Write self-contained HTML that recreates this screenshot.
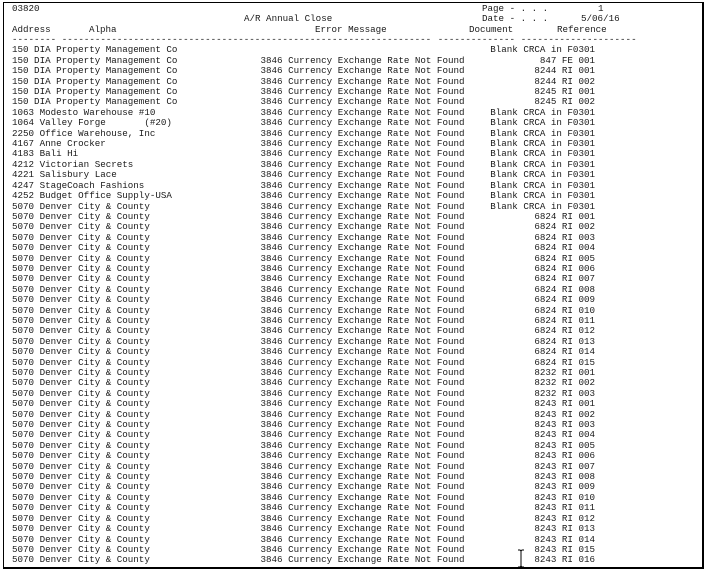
<!DOCTYPE html>
<html><head><meta charset="utf-8"><style>
html,body{margin:0;padding:0;background:#fff;width:705px;height:569px;overflow:hidden}
.box{position:absolute;left:3px;top:2px;width:698px;height:564px;border:1px solid #000;border-right-width:2px;border-bottom-width:2px}
.wrap{position:absolute;left:0;top:3.8px;width:705px;font-family:"Liberation Mono",monospace;font-size:9.2px;color:#1a1a1a}
.r{position:relative;height:10.41px;line-height:10.41px;white-space:pre}
.r span{position:absolute;top:0}
.a{left:12px}.e{left:260.5px}.d{right:110px}
</style></head><body>
<div class="box"></div>
<div class="wrap">
<div class="r"><span class="a">03820</span><span style="left:482px">Page - . . .</span><span style="left:598px">1</span></div>
<div class="r"><span style="left:244px">A/R Annual Close</span><span style="left:482px">Date - . . .</span><span style="left:581px">5/06/16</span></div>
<div class="r"><span class="a">Address</span><span style="left:89px">Alpha</span><span style="left:315px">Error Message</span><span style="left:469px">Document</span><span style="left:557px">Reference</span></div>
<div class="r"><span class="a">--------</span><span style="left:61.8px">-------------------------------------------------------------------</span><span style="left:437.8px">--------------</span><span style="left:520.8px">---------------------</span></div>
<div class="r"><span class="a">150 DIA Property Management Co</span><span class="d">Blank CRCA in F0301</span></div>
<div class="r"><span class="a">150 DIA Property Management Co</span><span class="e">3846 Currency Exchange Rate Not Found</span><span class="d">847 FE 001</span></div>
<div class="r"><span class="a">150 DIA Property Management Co</span><span class="e">3846 Currency Exchange Rate Not Found</span><span class="d">8244 RI 001</span></div>
<div class="r"><span class="a">150 DIA Property Management Co</span><span class="e">3846 Currency Exchange Rate Not Found</span><span class="d">8244 RI 002</span></div>
<div class="r"><span class="a">150 DIA Property Management Co</span><span class="e">3846 Currency Exchange Rate Not Found</span><span class="d">8245 RI 001</span></div>
<div class="r"><span class="a">150 DIA Property Management Co</span><span class="e">3846 Currency Exchange Rate Not Found</span><span class="d">8245 RI 002</span></div>
<div class="r"><span class="a">1063 Modesto Warehouse #10</span><span class="e">3846 Currency Exchange Rate Not Found</span><span class="d">Blank CRCA in F0301</span></div>
<div class="r"><span class="a">1064 Valley Forge       (#20)</span><span class="e">3846 Currency Exchange Rate Not Found</span><span class="d">Blank CRCA in F0301</span></div>
<div class="r"><span class="a">2250 Office Warehouse, Inc</span><span class="e">3846 Currency Exchange Rate Not Found</span><span class="d">Blank CRCA in F0301</span></div>
<div class="r"><span class="a">4167 Anne Crocker</span><span class="e">3846 Currency Exchange Rate Not Found</span><span class="d">Blank CRCA in F0301</span></div>
<div class="r"><span class="a">4183 Bali Hi</span><span class="e">3846 Currency Exchange Rate Not Found</span><span class="d">Blank CRCA in F0301</span></div>
<div class="r"><span class="a">4212 Victorian Secrets</span><span class="e">3846 Currency Exchange Rate Not Found</span><span class="d">Blank CRCA in F0301</span></div>
<div class="r"><span class="a">4221 Salisbury Lace</span><span class="e">3846 Currency Exchange Rate Not Found</span><span class="d">Blank CRCA in F0301</span></div>
<div class="r"><span class="a">4247 StageCoach Fashions</span><span class="e">3846 Currency Exchange Rate Not Found</span><span class="d">Blank CRCA in F0301</span></div>
<div class="r"><span class="a">4252 Budget Office Supply-USA</span><span class="e">3846 Currency Exchange Rate Not Found</span><span class="d">Blank CRCA in F0301</span></div>
<div class="r"><span class="a">5070 Denver City &amp; County</span><span class="e">3846 Currency Exchange Rate Not Found</span><span class="d">Blank CRCA in F0301</span></div>
<div class="r"><span class="a">5070 Denver City &amp; County</span><span class="e">3846 Currency Exchange Rate Not Found</span><span class="d">6824 RI 001</span></div>
<div class="r"><span class="a">5070 Denver City &amp; County</span><span class="e">3846 Currency Exchange Rate Not Found</span><span class="d">6824 RI 002</span></div>
<div class="r"><span class="a">5070 Denver City &amp; County</span><span class="e">3846 Currency Exchange Rate Not Found</span><span class="d">6824 RI 003</span></div>
<div class="r"><span class="a">5070 Denver City &amp; County</span><span class="e">3846 Currency Exchange Rate Not Found</span><span class="d">6824 RI 004</span></div>
<div class="r"><span class="a">5070 Denver City &amp; County</span><span class="e">3846 Currency Exchange Rate Not Found</span><span class="d">6824 RI 005</span></div>
<div class="r"><span class="a">5070 Denver City &amp; County</span><span class="e">3846 Currency Exchange Rate Not Found</span><span class="d">6824 RI 006</span></div>
<div class="r"><span class="a">5070 Denver City &amp; County</span><span class="e">3846 Currency Exchange Rate Not Found</span><span class="d">6824 RI 007</span></div>
<div class="r"><span class="a">5070 Denver City &amp; County</span><span class="e">3846 Currency Exchange Rate Not Found</span><span class="d">6824 RI 008</span></div>
<div class="r"><span class="a">5070 Denver City &amp; County</span><span class="e">3846 Currency Exchange Rate Not Found</span><span class="d">6824 RI 009</span></div>
<div class="r"><span class="a">5070 Denver City &amp; County</span><span class="e">3846 Currency Exchange Rate Not Found</span><span class="d">6824 RI 010</span></div>
<div class="r"><span class="a">5070 Denver City &amp; County</span><span class="e">3846 Currency Exchange Rate Not Found</span><span class="d">6824 RI 011</span></div>
<div class="r"><span class="a">5070 Denver City &amp; County</span><span class="e">3846 Currency Exchange Rate Not Found</span><span class="d">6824 RI 012</span></div>
<div class="r"><span class="a">5070 Denver City &amp; County</span><span class="e">3846 Currency Exchange Rate Not Found</span><span class="d">6824 RI 013</span></div>
<div class="r"><span class="a">5070 Denver City &amp; County</span><span class="e">3846 Currency Exchange Rate Not Found</span><span class="d">6824 RI 014</span></div>
<div class="r"><span class="a">5070 Denver City &amp; County</span><span class="e">3846 Currency Exchange Rate Not Found</span><span class="d">6824 RI 015</span></div>
<div class="r"><span class="a">5070 Denver City &amp; County</span><span class="e">3846 Currency Exchange Rate Not Found</span><span class="d">8232 RI 001</span></div>
<div class="r"><span class="a">5070 Denver City &amp; County</span><span class="e">3846 Currency Exchange Rate Not Found</span><span class="d">8232 RI 002</span></div>
<div class="r"><span class="a">5070 Denver City &amp; County</span><span class="e">3846 Currency Exchange Rate Not Found</span><span class="d">8232 RI 003</span></div>
<div class="r"><span class="a">5070 Denver City &amp; County</span><span class="e">3846 Currency Exchange Rate Not Found</span><span class="d">8243 RI 001</span></div>
<div class="r"><span class="a">5070 Denver City &amp; County</span><span class="e">3846 Currency Exchange Rate Not Found</span><span class="d">8243 RI 002</span></div>
<div class="r"><span class="a">5070 Denver City &amp; County</span><span class="e">3846 Currency Exchange Rate Not Found</span><span class="d">8243 RI 003</span></div>
<div class="r"><span class="a">5070 Denver City &amp; County</span><span class="e">3846 Currency Exchange Rate Not Found</span><span class="d">8243 RI 004</span></div>
<div class="r"><span class="a">5070 Denver City &amp; County</span><span class="e">3846 Currency Exchange Rate Not Found</span><span class="d">8243 RI 005</span></div>
<div class="r"><span class="a">5070 Denver City &amp; County</span><span class="e">3846 Currency Exchange Rate Not Found</span><span class="d">8243 RI 006</span></div>
<div class="r"><span class="a">5070 Denver City &amp; County</span><span class="e">3846 Currency Exchange Rate Not Found</span><span class="d">8243 RI 007</span></div>
<div class="r"><span class="a">5070 Denver City &amp; County</span><span class="e">3846 Currency Exchange Rate Not Found</span><span class="d">8243 RI 008</span></div>
<div class="r"><span class="a">5070 Denver City &amp; County</span><span class="e">3846 Currency Exchange Rate Not Found</span><span class="d">8243 RI 009</span></div>
<div class="r"><span class="a">5070 Denver City &amp; County</span><span class="e">3846 Currency Exchange Rate Not Found</span><span class="d">8243 RI 010</span></div>
<div class="r"><span class="a">5070 Denver City &amp; County</span><span class="e">3846 Currency Exchange Rate Not Found</span><span class="d">8243 RI 011</span></div>
<div class="r"><span class="a">5070 Denver City &amp; County</span><span class="e">3846 Currency Exchange Rate Not Found</span><span class="d">8243 RI 012</span></div>
<div class="r"><span class="a">5070 Denver City &amp; County</span><span class="e">3846 Currency Exchange Rate Not Found</span><span class="d">8243 RI 013</span></div>
<div class="r"><span class="a">5070 Denver City &amp; County</span><span class="e">3846 Currency Exchange Rate Not Found</span><span class="d">8243 RI 014</span></div>
<div class="r"><span class="a">5070 Denver City &amp; County</span><span class="e">3846 Currency Exchange Rate Not Found</span><span class="d">8243 RI 015</span></div>
<div class="r"><span class="a">5070 Denver City &amp; County</span><span class="e">3846 Currency Exchange Rate Not Found</span><span class="d">8243 RI 016</span></div>
</div>
<svg style="position:absolute;left:517px;top:549px" width="9" height="20"><path d="M1 1h2l1 1 1-1h2M4 2v15M1 18h2l1-1 1 1h2" stroke="#000" fill="none" stroke-width="1"/></svg>
</body></html>
